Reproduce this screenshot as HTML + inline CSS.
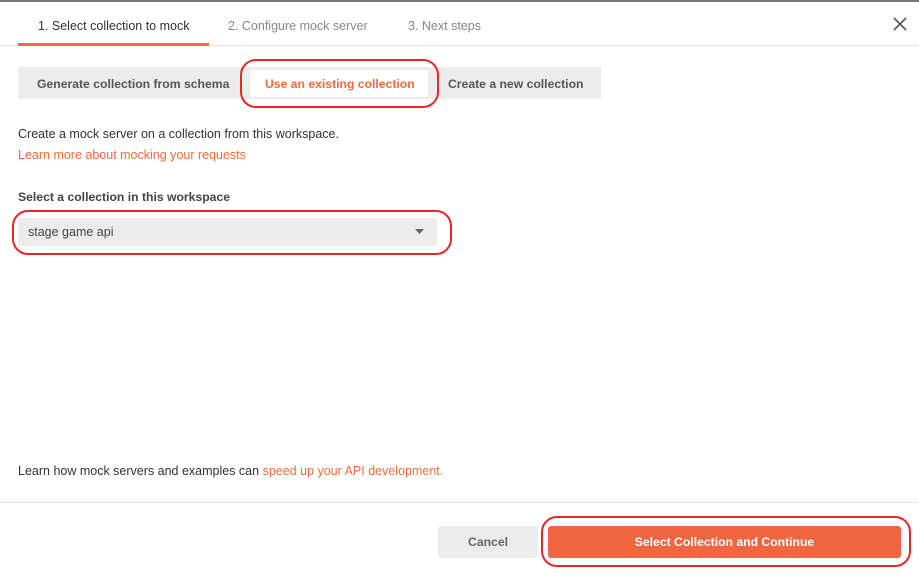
<!DOCTYPE html><html><head><style>
body{margin:0;width:919px;height:580px;background:#fff;font-family:"Liberation Sans",sans-serif;font-size:12.5px;color:#333;position:relative;overflow:hidden}
.a{position:absolute}
.o{position:absolute;border:2px solid #e8262a;border-radius:16px;box-sizing:border-box}
.l{color:#f26b3a}
</style></head><body>
<div class="a" style="left:0;top:0;width:919px;height:2px;background:#777"></div>
<div class="a" style="left:38px;top:19px;font-size:12.5px;color:#333">1. Select collection to mock</div>
<div class="a" style="left:228px;top:19px;font-size:12.5px;color:#888">2. Configure mock server</div>
<div class="a" style="left:408px;top:19px;font-size:12.5px;color:#888">3. Next steps</div>
<div class="a" style="left:0;top:45px;width:919px;height:1px;background:#e4e4e4"></div>
<div class="a" style="left:18px;top:43px;width:191px;height:3px;background:#f26b3a"></div>
<svg class="a" style="left:893px;top:17px" width="14" height="14"><path d="M1 1L13 13M13 1L1 13" stroke="#555" stroke-width="1.6"/></svg>
<div class="a" style="left:18px;top:67px;width:583px;height:32px;background:#ececec;border-radius:2px"></div>
<div class="a" style="left:250px;top:70px;width:178px;height:27px;background:#fff;border-radius:2px"></div>
<div class="a" style="left:37px;top:77px;font-weight:bold;color:#555;font-size:12.2px">Generate collection from schema</div>
<div class="a l" style="left:265px;top:77px;font-weight:bold;font-size:12.2px">Use an existing collection</div>
<div class="a" style="left:448px;top:77px;font-weight:bold;color:#555;font-size:12.2px">Create a new collection</div>
<div class="o" style="left:240px;top:59px;width:199px;height:49px"></div>
<div class="a" style="left:18px;top:127px">Create a mock server on a collection from this workspace.</div>
<div class="a l" style="left:18px;top:148px">Learn more about mocking your requests</div>
<div class="a" style="left:18px;top:190px;font-weight:bold;color:#444;font-size:12.2px">Select a collection in this workspace</div>
<div class="a" style="left:18px;top:218px;width:419px;height:28px;background:#ececec;border-radius:2px"></div>
<div class="a" style="left:28px;top:225px;color:#444">stage game api</div>
<svg class="a" style="left:415px;top:229px" width="9" height="6"><path d="M0 0H9L4.5 5Z" fill="#666"/></svg>
<div class="o" style="left:12px;top:210px;width:440px;height:45px"></div>
<div class="a" style="left:18px;top:464px">Learn how mock servers and examples can <span class="l">speed up your API development.</span></div>
<div class="a" style="left:0;top:502px;width:919px;height:1px;background:#e4e4e4"></div>
<div class="a" style="left:438px;top:526px;width:100px;height:32px;background:#ececec;border-radius:3px;text-align:center;line-height:32px;font-weight:bold;color:#666;font-size:12.2px">Cancel</div>
<div class="a" style="left:548px;top:526px;width:353px;height:32px;background:#ef6640;border-radius:3px;text-align:center;line-height:32px;font-weight:bold;color:#fff;font-size:12.2px">Select Collection and Continue</div>
<div class="o" style="left:541px;top:516px;width:370px;height:51px"></div>
</body></html>
